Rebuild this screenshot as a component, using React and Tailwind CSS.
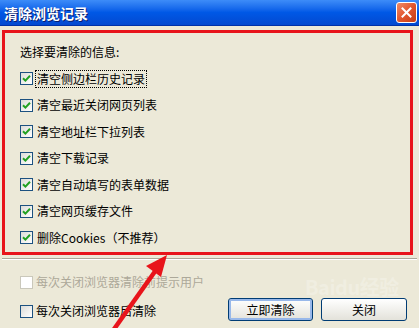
import React from "react";

function Check({ checked, disabled }) {
  return (
    <div
      className={
        "w-[13px] h-[13px] shrink-0 border flex items-center justify-center " +
        (disabled
          ? "border-[#cac8bb] bg-white"
          : "border-[#1c5180] bg-gradient-to-br from-[#dcdcd7] to-[#ffffff]")
      }
    >
      {checked && (
        <svg width="9" height="9" viewBox="0 0 9 9">
          <path d="M1 4.2 L3.4 6.6 L8 1.8" fill="none" stroke="#21a121" strokeWidth="2" />
        </svg>
      )}
    </div>
  );
}

function Row({ label, focus }) {
  return (
    <div className="h-[26.5px] flex items-center">
      <Check checked />
      <span
        className={
          "ml-[2px] text-[12px] leading-[14px] text-black px-[1px] py-[1px] " +
          (focus ? "border border-dotted border-black" : "border border-transparent")
        }
      >
        {label}
      </span>
    </div>
  );
}

export default function App() {
  const items = [
    "清空侧边栏历史记录",
    "清空最近关闭网页列表",
    "清空地址栏下拉列表",
    "清空下载记录",
    "清空自动填写的表单数据",
    "清空网页缓存文件",
    "删除Cookies（不推荐）",
  ];
  return (
    <div
      className="relative w-[419px] h-[328px] overflow-hidden bg-[#ece9d8]"
      style={{ fontFamily: '"Noto Sans CJK SC", "Noto Sans", sans-serif' }}
    >
      {/* title bar */}
      <div className="h-[26px] bg-gradient-to-b from-[#3d8cf8] via-[#0058e6] to-[#0349d0] border-b border-[#0031a8] flex items-center justify-between pl-[4px] pr-[2px]">
        <span className="text-white font-bold text-[14px] leading-none [text-shadow:1px_1px_0_#0a1e6e]">
          清除浏览记录
        </span>
        <div className="w-[21px] h-[21px] rounded-[3px] border border-white bg-gradient-to-br from-[#ee8a68] via-[#e2552c] to-[#c63d14] flex items-center justify-center">
          <svg width="11" height="11" viewBox="0 0 11 11">
            <path d="M1.5 1.5 L9.5 9.5 M9.5 1.5 L1.5 9.5" stroke="white" strokeWidth="2" strokeLinecap="square" />
          </svg>
        </div>
      </div>

      {/* red highlighted group */}
      <div className="ml-[2px] mt-[4px] w-[411px] h-[225px] border-[3px] border-[#e8141b] pl-[15px] pt-[6px]">
        <div className="h-[26.5px] flex items-center text-[12px] text-black">选择要清除的信息:</div>
        {items.map((t, i) => (
          <Row key={t} label={t} focus={i === 0} />
        ))}
      </div>

      {/* separator */}
      <div className="mt-[3px] mx-[2px] h-[2px] border-t border-[#aca899] border-b border-b-white" />

      {/* bottom area */}
      <div className="flex justify-between pl-[20px] pr-[12px] pt-[10px]">
        <div className="flex flex-col gap-[5px]">
          <div className="h-[24px] flex items-center">
            <Check disabled />
            <span className="ml-[3px] text-[12px] text-[#aca899]">每次关闭浏览器清除前提示用户</span>
          </div>
          <div className="h-[24px] flex items-center">
            <Check />
            <span className="ml-[3px] text-[12px] text-black">每次关闭浏览器后清除</span>
          </div>
        </div>
        <div className="flex gap-[8px] mt-[28px] h-[23px]">
          <div className="w-[85px] h-[23px] rounded-[3px] border border-[#003c74] bg-gradient-to-b from-[#ffffff] to-[#e3e2da] flex items-center justify-center shadow-[inset_0_0_0_2px_#98b8ea] text-[12px] text-black">
            立即清除
          </div>
          <div className="w-[86px] h-[23px] rounded-[3px] border border-[#003c74] bg-gradient-to-b from-[#ffffff] to-[#e3e2da] flex items-center justify-center text-[12px] text-black">
            关闭
          </div>
        </div>
      </div>

      {/* watermark */}
      <div className="absolute left-[305px] top-[272px] text-[20px] font-bold text-white/25 tracking-tight">
        Baidu经验
      </div>

      {/* red arrow */}
      <svg className="absolute left-0 top-0" width="419" height="328" viewBox="0 0 419 328">
        <line x1="112" y1="332" x2="156" y2="270" stroke="#e8141b" strokeWidth="4.5" />
        <polygon points="167,255 146,266 161,277" fill="#e8141b" />
      </svg>
    </div>
  );
}
